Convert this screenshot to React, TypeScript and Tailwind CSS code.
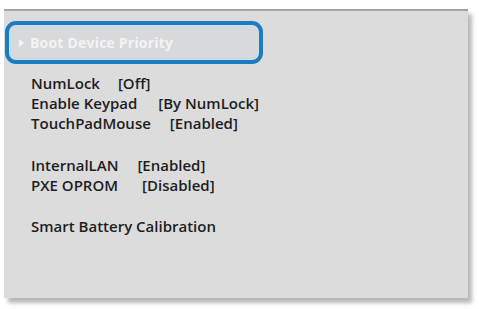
import React from 'react';

const font = { fontFamily: '"Open Sans", "Noto Sans", sans-serif' };

const Row: React.FC<{ label: string; value?: string; gap: string }> = ({ label, value, gap }) => (
  <div className="flex h-[20px] items-center">
    <span>{label}</span>
    {value && <span className={gap}>{value}</span>}
  </div>
);

const App: React.FC = () => {
  return (
    <div className="w-[479px] h-[309px] bg-white pt-[9px] pl-[4px] overflow-hidden" style={font}>
      <div className="w-[464px] h-[289px] bg-[#dcdcdc] border-t-2 border-[#a4a4a4] shadow-[4px_5px_4px_rgba(0,0,0,0.28)] pt-[10px]">
        <div className="ml-[1px] w-[258px] h-[43px] rounded-[11px] border-4 border-[#1a7dc2] p-[1px]">
          <div className="h-full rounded-[7px] border border-[#b9dff2] bg-[#d7d9db] flex items-center pl-[8px] gap-[6px]">
            <span className="w-0 h-0 border-y-[4px] border-y-transparent border-l-[5px] border-l-[#f4f4f4]"></span>
            <span className="text-[#f4f4f4] font-bold text-[14px] tracking-[0.2px]">Boot Device Priority</span>
          </div>
        </div>

        <div className="pl-[27px] pt-[9px] text-[15px] font-semibold text-[#1e1e1e] leading-[20px]">
          <Row label="NumLock" value="[Off]" gap="ml-[18px]" />
          <Row label="Enable Keypad" value="[By NumLock]" gap="ml-[21px]" />
          <Row label="TouchPadMouse" value="[Enabled]" gap="ml-[19px]" />
          <div className="h-[22px]" />
          <Row label="InternalLAN" value="[Enabled]" gap="ml-[19px]" />
          <Row label="PXE OPROM" value="[Disabled]" gap="ml-[24px]" />
          <div className="h-[21px]" />
          <Row label="Smart Battery Calibration" gap="" />
        </div>
      </div>
    </div>
  );
};

export default App;
